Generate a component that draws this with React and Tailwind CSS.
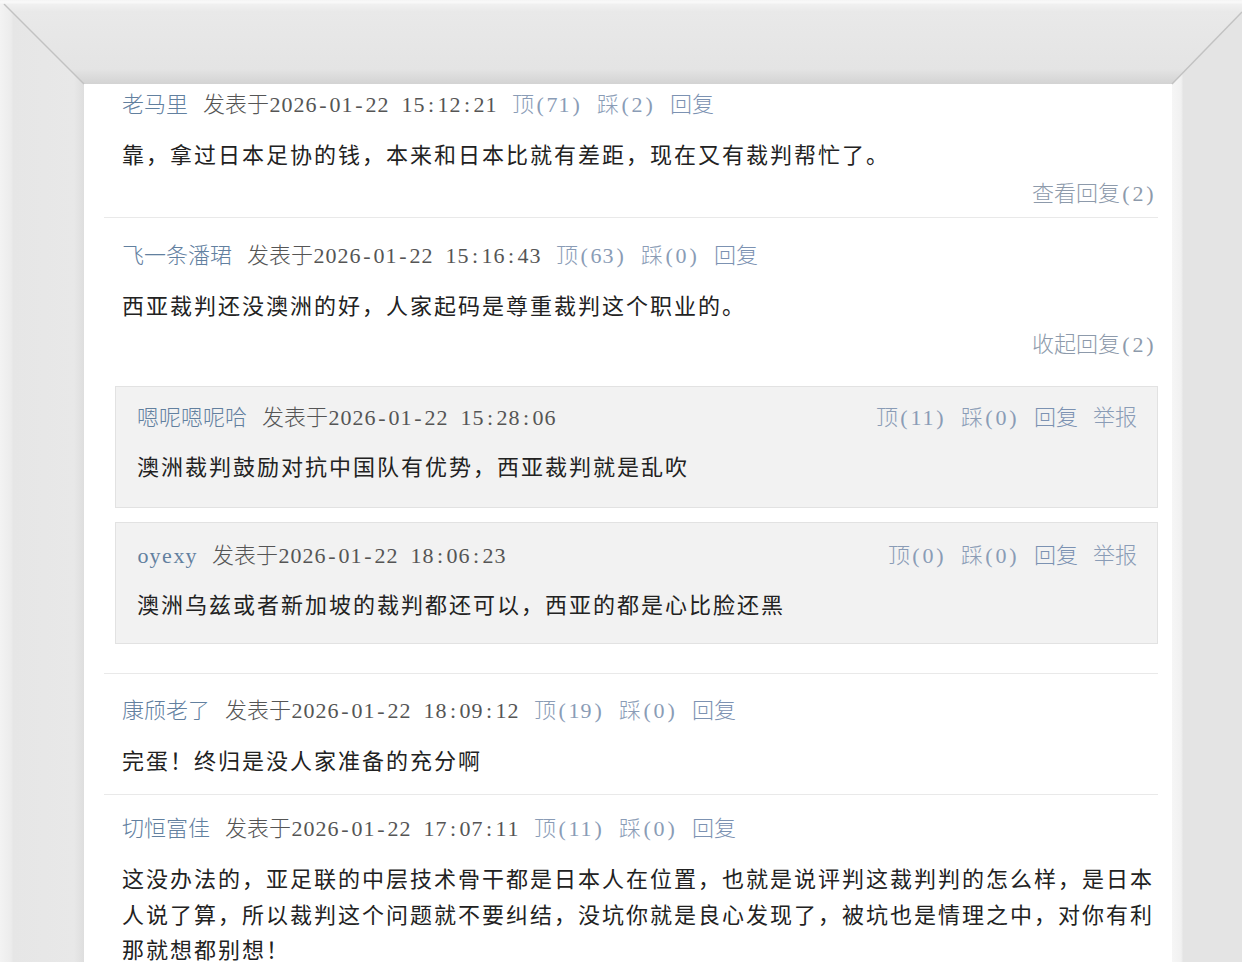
import React from 'react';

const comments = [
  {
    name: '老马里',
    time: '2026-01-22 15:12:21',
    up: '(71)',
    down: '(2)',
    text: '靠，拿过日本足协的钱，本来和日本比就有差距，现在又有裁判帮忙了。',
    link: '查看回复',
  },
  {
    name: '飞一条潘珺',
    time: '2026-01-22 15:16:43',
    up: '(63)',
    down: '(0)',
    text: '西亚裁判还没澳洲的好，人家起码是尊重裁判这个职业的。',
    link: '收起回复',
    replies: [
      { name: '嗯呢嗯呢哈', time: '2026-01-22 15:28:06', up: '(11)', down: '(0)', text: '澳洲裁判鼓励对抗中国队有优势，西亚裁判就是乱吹' },
      { name: 'oyexy', time: '2026-01-22 18:06:23', up: '(0)', down: '(0)', text: '澳洲乌兹或者新加坡的裁判都还可以，西亚的都是心比脸还黑' },
    ],
  },
  {
    name: '康颀老了',
    time: '2026-01-22 18:09:12',
    up: '(19)',
    down: '(0)',
    text: '完蛋！终归是没人家准备的充分啊',
  },
  {
    name: '切恒富佳',
    time: '2026-01-22 17:07:11',
    up: '(11)',
    down: '(0)',
    text: '这没办法的，亚足联的中层技术骨干都是日本人在位置，也就是说评判这裁判判的怎么样，是日本人说了算，所以裁判这个问题就不要纠结，没坑你就是良心发现了，被坑也是情理之中，对你有利那就想都别想！',
  },
];

const head = "font-['Liberation_Serif','Noto_Sans_CJK_SC',serif]";

const Zh = ({ children }) => <span className="font-['Noto_Sans_CJK_SC',sans-serif] text-[22px] font-light">{children}</span>;

// half-width serif glyphs on a fixed 12px grid, like SimSun digits
const Num = ({ children }) => (
  <span className="text-[22px]">
    {[...children].map((ch, k) => (
      <span key={k} className="inline-block w-[12px] text-center">{ch}</span>
    ))}
  </span>
);

const Actions = ({ up, down, report }) => (
  <div className="flex items-baseline gap-[15px] text-[#8a9cb6]">
    <span><Zh>顶</Zh><Num>{up}</Num></span>
    <span><Zh>踩</Zh><Num>{down}</Num></span>
    <span className="text-[#7c92b2]"><Zh>回复</Zh></span>
    {report && <span><Zh>举报</Zh></span>}
  </div>
);

const Meta = ({ c, boxed }) => (
  <div className={`${head} flex h-[30px] items-baseline pt-[2px] leading-[22px] ${boxed ? 'justify-between' : ''}`}>
    <div className="flex items-baseline gap-[15px]">
      <span className="text-[#62809f]">
        {/^[a-z]/.test(c.name) ? <Num>{c.name}</Num> : <Zh>{c.name}</Zh>}
      </span>
      <span className="text-[#555]">
        <Zh>发表于</Zh>
        <Num>{c.time}</Num>
      </span>
      {!boxed && <Actions up={c.up} down={c.down} />}
    </div>
    {boxed && <Actions up={c.up} down={c.down} report />}
  </div>
);

const Body = ({ children, className = '' }) => (
  <p className={`font-['Noto_Sans_CJK_SC',sans-serif] text-[22px] tracking-[2px] text-[#222] ${className}`}>{children}</p>
);

const ReplyBox = ({ r, className }) => (
  <div className={`border border-[#e2e2e2] bg-[#f2f2f2] pl-[21px] pr-[20px] ${className}`}>
    <Meta c={r} boxed />
    <Body className="mt-[15px] leading-[36px]">{r.text}</Body>
  </div>
);

const Comment = ({ c, i }) => {
  const pad = ['pt-[5px]', 'pt-[22px]', 'pt-[21px]', 'pt-[18px]'][i];
  const bottom = c.replies ? 'pb-[29px]' : c.link ? 'pb-[9px]' : 'pb-[17px]';
  return (
    <div className={`${pad} ${bottom} ${i < 3 ? 'border-b border-[#e9e9e9]' : ''}`}>
      <div className="pl-[18px] pr-[1px]">
        <Meta c={c} />
        <Body className={`${i === 3 ? 'mt-[17px] leading-[35.5px]' : 'mt-[16px] leading-[36px]'}`}>{c.text}</Body>
        {c.link && (
          <div className={`${head} mt-[7px] flex h-[30px] items-baseline justify-end pt-[2px] pr-[1px] leading-[22px] text-[#8d9aab]`}>
            <Zh>{c.link}</Zh>
            <Num>(2)</Num>
          </div>
        )}
      </div>
      {c.replies && (
        <div className="ml-[11px] mt-[27px] flex flex-col gap-[14px]">
          <ReplyBox r={c.replies[0]} className="pt-[15px] pb-[24px]" />
          <ReplyBox r={c.replies[1]} className="pt-[17px] pb-[22px]" />
        </div>
      )}
    </div>
  );
};

export default function App() {
  return (
    <div className="relative h-[962px] w-[1242px] overflow-hidden bg-[#e6e6e6]">
      <div className="ml-[84px] mr-[70px] mt-[84px] h-[878px] bg-white">
        <div className="ml-[20px] mr-[14px]">
          {comments.map((c, i) => (
            <Comment key={i} c={c} i={i} />
          ))}
        </div>
      </div>

      {/* picture frame bevel */}
      <svg className="pointer-events-none absolute inset-0" width="1242" height="962">
        <defs>
          <linearGradient id="top" x1="0" y1="0" x2="0" y2="84" gradientUnits="userSpaceOnUse">
            <stop offset="0" stopColor="#f4f4f4" />
            <stop offset="0.14" stopColor="#e9e9e9" />
            <stop offset="0.82" stopColor="#e4e4e4" />
            <stop offset="1" stopColor="#d3d3d3" />
          </linearGradient>
          <linearGradient id="left" x1="0" y1="0" x2="84" y2="0" gradientUnits="userSpaceOnUse">
            <stop offset="0" stopColor="#f3f3f3" />
            <stop offset="0.13" stopColor="#ececec" />
            <stop offset="0.16" stopColor="#e6e6e6" />
            <stop offset="0.88" stopColor="#e8e8e8" />
            <stop offset="1" stopColor="#dedede" />
          </linearGradient>
          <linearGradient id="right" x1="1172" y1="0" x2="1242" y2="0" gradientUnits="userSpaceOnUse">
            <stop offset="0" stopColor="#f6f6f6" />
            <stop offset="0.13" stopColor="#f1f1f1" />
            <stop offset="0.16" stopColor="#e4e4e4" />
            <stop offset="1" stopColor="#e4e4e4" />
          </linearGradient>
        </defs>
        <polygon points="0,0 1242,0 1242,12 1172,84 84,84" fill="url(#top)" />
        <polygon points="0,0 84,84 84,962 0,962" fill="url(#left)" />
        <polygon points="1242,12 1172,84 1172,962 1242,962" fill="url(#right)" />
        <line x1="4" y1="4" x2="84" y2="84" stroke="#c2c2c2" strokeWidth="1.5" />
        <line x1="1242" y1="12" x2="1172" y2="84" stroke="#c2c2c2" strokeWidth="1.5" />
        <line x1="0" y1="2" x2="1242" y2="2" stroke="#f8f8f8" strokeWidth="3" />
      </svg>
    </div>
  );
}
